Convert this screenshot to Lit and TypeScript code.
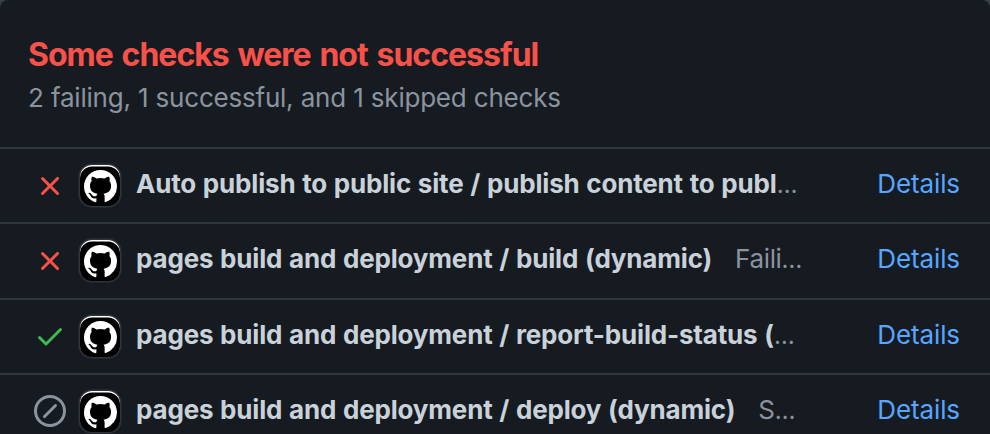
import { LitElement, html, css, svg } from "lit";
import { customElement, property } from "lit/decorators.js";

type State = "failing" | "successful" | "skipped";

interface Check {
  state: State;
  name: string;
  note: string;
}

const CHECKS: Check[] = [
  { state: "failing", name: "Auto publish to public site / publish content to publ", note: "" },
  { state: "failing", name: "pages build and deployment / build (dynamic)", note: "Faili" },
  { state: "successful", name: "pages build and deployment / report-build-status (", note: "" },
  { state: "skipped", name: "pages build and deployment / deploy (dynamic)", note: "S" },
];

const STATE_PATHS: Record<State, string> = {
  failing:
    "M3.72 3.72a.75.75 0 0 1 1.06 0L8 6.94l3.22-3.22a.75.75 0 1 1 1.06 1.06L9.06 8l3.22 3.22a.75.75 0 1 1-1.06 1.06L8 9.06l-3.22 3.22a.75.75 0 0 1-1.06-1.06L6.94 8 3.72 4.78a.75.75 0 0 1 0-1.06z",
  successful:
    "M13.78 4.22a.75.75 0 0 1 0 1.06l-7.25 7.25a.75.75 0 0 1-1.06 0L2.22 9.28a.75.75 0 0 1 1.06-1.06L6 10.94l6.72-6.72a.75.75 0 0 1 1.06 0z",
  skipped:
    "M1.5 8a6.5 6.5 0 1 1 13 0 6.5 6.5 0 0 1-13 0zM8 0a8 8 0 1 0 0 16A8 8 0 0 0 8 0zm3.28 5.78a.75.75 0 0 0-1.06-1.06l-5.5 5.5a.75.75 0 1 0 1.06 1.06l5.5-5.5z",
};

const MARK =
  "M8 0C3.58 0 0 3.58 0 8c0 3.54 2.29 6.53 5.47 7.59.4.07.55-.17.55-.38 0-.19-.01-.82-.01-1.49-2.01.37-2.53-.49-2.69-.94-.09-.23-.48-.98-.82-1.17-.28-.15-.68-.52-.01-.53.63-.01 1.08.58 1.23.82.72 1.21 1.87.87 2.33.66.07-.52.28-.87.51-1.07-1.78-.2-3.64-.89-3.64-3.95 0-.87.31-1.59.82-2.15-.08-.2-.36-1.02.08-2.12 0 0 .67-.21 2.2.82.64-.18 1.32-.27 2-.27s1.36.09 2 .27c1.53-1.04 2.2-.82 2.2-.82.44 1.1.16 1.92.08 2.12.51.56.82 1.27.82 2.15 0 3.07-1.87 3.75-3.65 3.95.29.25.54.73.54 1.48 0 1.07-.01 1.93-.01 2.2 0 .21.15.46.55.38A8.01 8.01 0 0 0 16 8c0-4.42-3.58-8-8-8z";

@customElement("check-row")
class CheckRow extends LitElement {
  @property({ attribute: false }) check!: Check;

  static styles = css`
    :host {
      display: flex;
      align-items: flex-start;
      box-sizing: border-box;
      padding: 16px 30px 0 34px;
      border-top: 2px solid #30363d;
      font-size: 26px;
      line-height: 36px;
      white-space: pre;
      color: #8b949e;
    }
    .state { display: block; width: 32px; height: 32px; margin: 4px 14px 0 0; flex: none; }
    .failing { fill: #f85149; margin-top: 5px; }
    .successful { fill: #3fb950; }
    .skipped { fill: #8b949e; }
    .avatar {
      flex: none;
      display: flex;
      justify-content: center;
      box-sizing: border-box;
      width: 40px;
      height: 41px;
      padding-top: 5px;
      margin-right: 16px;
      border-radius: 12px;
      background: #000;
      box-shadow: inset 0 1.4px 0 #fff, 0 0 0 1.6px #2f343b;
    }
    .mark { display: block; width: 33px; height: 33px; fill: #fff; }
    .label { flex: 1; margin-top: 1px; }
    .name { font-weight: 650; letter-spacing: -0.18px; word-spacing: 0.8px; color: #c9d1d9; }
    .note { margin-left: 23px; letter-spacing: -0.35px; }
    .more { font-size: 24px; line-height: 1; }
    .details { color: #58a6ff; text-decoration: none; letter-spacing: -0.1px; margin-top: 1px; }
  `;

  render() {
    const { state, name, note } = this.check;
    return html`<svg class="state ${state}" viewBox="0 0 16 16">${svg`<path d=${STATE_PATHS[state]} />`}</svg
      ><span class="avatar"><svg class="mark" viewBox="0 0 16 16"><path d=${MARK} /></svg></span
      ><span class="label"><span class="name">${name}</span>${note ? html`<span class="note">${note}</span>` : ""}<span class="more">…</span></span
      ><a class="details">Details</a>`;
  }
}

@customElement("app-root")
class AppRoot extends LitElement {
  static styles = css`
    :host {
      display: block;
      height: 434px;
      overflow: hidden;
      background: #3a4047;
      font-family: Inter, "Liberation Sans", sans-serif;
    }
    .panel {
      height: 434px;
      overflow: hidden;
      border-radius: 8px 8px 0 0;
      background: #161b22;
      display: grid;
      grid-template-rows: 147px 75px 76px 75px 75px;
    }
    .header { padding: 34px 28px 0; }
    .title {
      margin: 0;
      font-size: 32px;
      line-height: 42px;
      font-weight: 650;
      letter-spacing: -1px;
      word-spacing: 2.2px;
      color: #f85149;
      white-space: nowrap;
    }
    .summary {
      margin: 4px 0 0;
      font-size: 26px;
      line-height: 36px;
      letter-spacing: -0.22px;
      word-spacing: 0.2px;
      color: #8b949e;
      white-space: nowrap;
    }
  `;

  render() {
    return html`<div class="panel">
      <div class="header">
        <h3 class="title">Some checks were not successful</h3>
        <p class="summary">2 failing, 1 successful, and 1 skipped checks</p>
      </div>
      ${CHECKS.map((c) => html`<check-row .check=${c}></check-row>`)}
    </div>`;
  }
}
